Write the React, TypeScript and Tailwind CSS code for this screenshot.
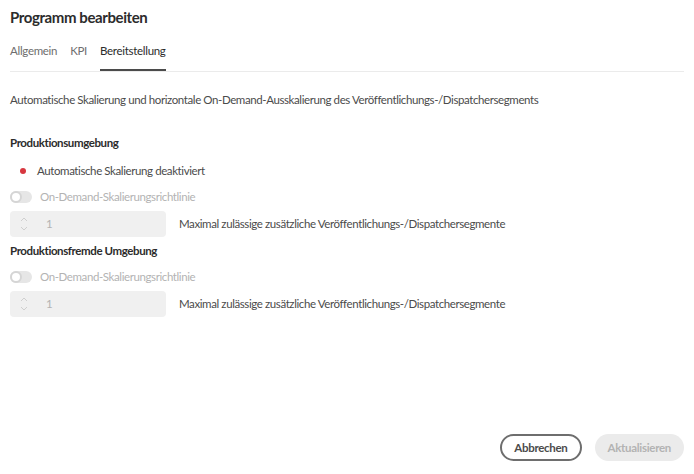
import { useState } from 'react'

function Toggle() {
  return (
    <span className="relative inline-block h-[12px] w-[22px] rounded-full bg-[#e6e6e6]">
      <span className="absolute left-0 top-0 h-[12px] w-[12px] rounded-full border-2 border-[#d5d5d5] bg-white" />
    </span>
  )
}

function Stepper() {
  return (
    <div className="flex h-[26px] w-[156px] items-center rounded-[4px] bg-[#f0f0f0]">
      <div className="flex w-[28px] flex-col items-center justify-center">
        <svg width="8" height="5" viewBox="0 0 8 5" className="mb-[4px]">
          <path d="M1 4 L4 1 L7 4" fill="none" stroke="#cfcfcf" strokeWidth="1" />
        </svg>
        <svg width="8" height="5" viewBox="0 0 8 5">
          <path d="M1 1 L4 4 L7 1" fill="none" stroke="#cfcfcf" strokeWidth="1" />
        </svg>
      </div>
      <span className="pl-[8px] text-[#b3b3b3]">1</span>
    </div>
  )
}

function ScalingBlock() {
  return (
    <>
      <div className="mt-[8px] flex h-[18px] items-center gap-[8px]">
        <Toggle />
        <span className="text-[#b3b3b3]">On-Demand-Skalierungsrichtlinie</span>
      </div>
      <div className="mt-[5px] flex items-center gap-[13px]">
        <Stepper />
        <span className="text-[#4b4b4b]">
          Maximal zulässige zusätzliche Veröffentlichungs-/Dispatchersegmente
        </span>
      </div>
    </>
  )
}

export default function App() {
  const [tab] = useState('Bereitstellung')
  const tabs = ['Allgemein', 'KPI', 'Bereitstellung']

  return (
    <div className="flex h-[474px] w-[694px] flex-col bg-white px-[10px] font-['Lato',sans-serif] text-[11.5px] leading-[18px] tracking-[-0.4px] text-[#2c2c2c]">
      <h1 className="mt-[6px] text-[15px] font-bold leading-[22px] tracking-[-0.4px] text-[#2c2c2c]">
        Programm bearbeiten
      </h1>

      <div className="mt-[15px] flex gap-[13px] border-b border-[#ebebeb] tracking-[-0.3px]">
        {tabs.map((t) => (
          <span
            key={t}
            className={`pb-[10px] leading-[16px] ${
              t === tab ? 'border-b-2 border-[#4b4b4b] text-[#2c2c2c]' : 'border-b-2 border-transparent text-[#6e6e6e]'
            }`}
          >
            {t}
          </span>
        ))}
      </div>

      <p className="mt-[19px] text-[#4b4b4b]">
        Automatische Skalierung und horizontale On-Demand-Ausskalierung des Veröffentlichungs-/Dispatchersegments
      </p>

      <h2 className="mt-[25px] font-bold text-[#2c2c2c]">Produktionsumgebung</h2>
      <div className="mt-[10px] flex items-center gap-[11px] pl-[10px]">
        <span className="h-[6px] w-[6px] rounded-full bg-[#d7373f]" />
        <span className="text-[#4b4b4b]">Automatische Skalierung deaktiviert</span>
      </div>
      <ScalingBlock />

      <h2 className="mt-[5px] font-bold text-[#2c2c2c]">Produktionsfremde Umgebung</h2>
      <ScalingBlock />

      <div className="mt-auto mb-[13px] flex justify-end gap-[13px] tracking-[-0.3px]">
        <button className="h-[27px] rounded-full border-2 border-[#6e6e6e] px-[12px] font-bold text-[#4b4b4b]">
          Abbrechen
        </button>
        <button className="h-[27px] rounded-full bg-[#ebebeb] px-[13px] font-bold text-[#b3b3b3]">
          Aktualisieren
        </button>
      </div>
    </div>
  )
}
